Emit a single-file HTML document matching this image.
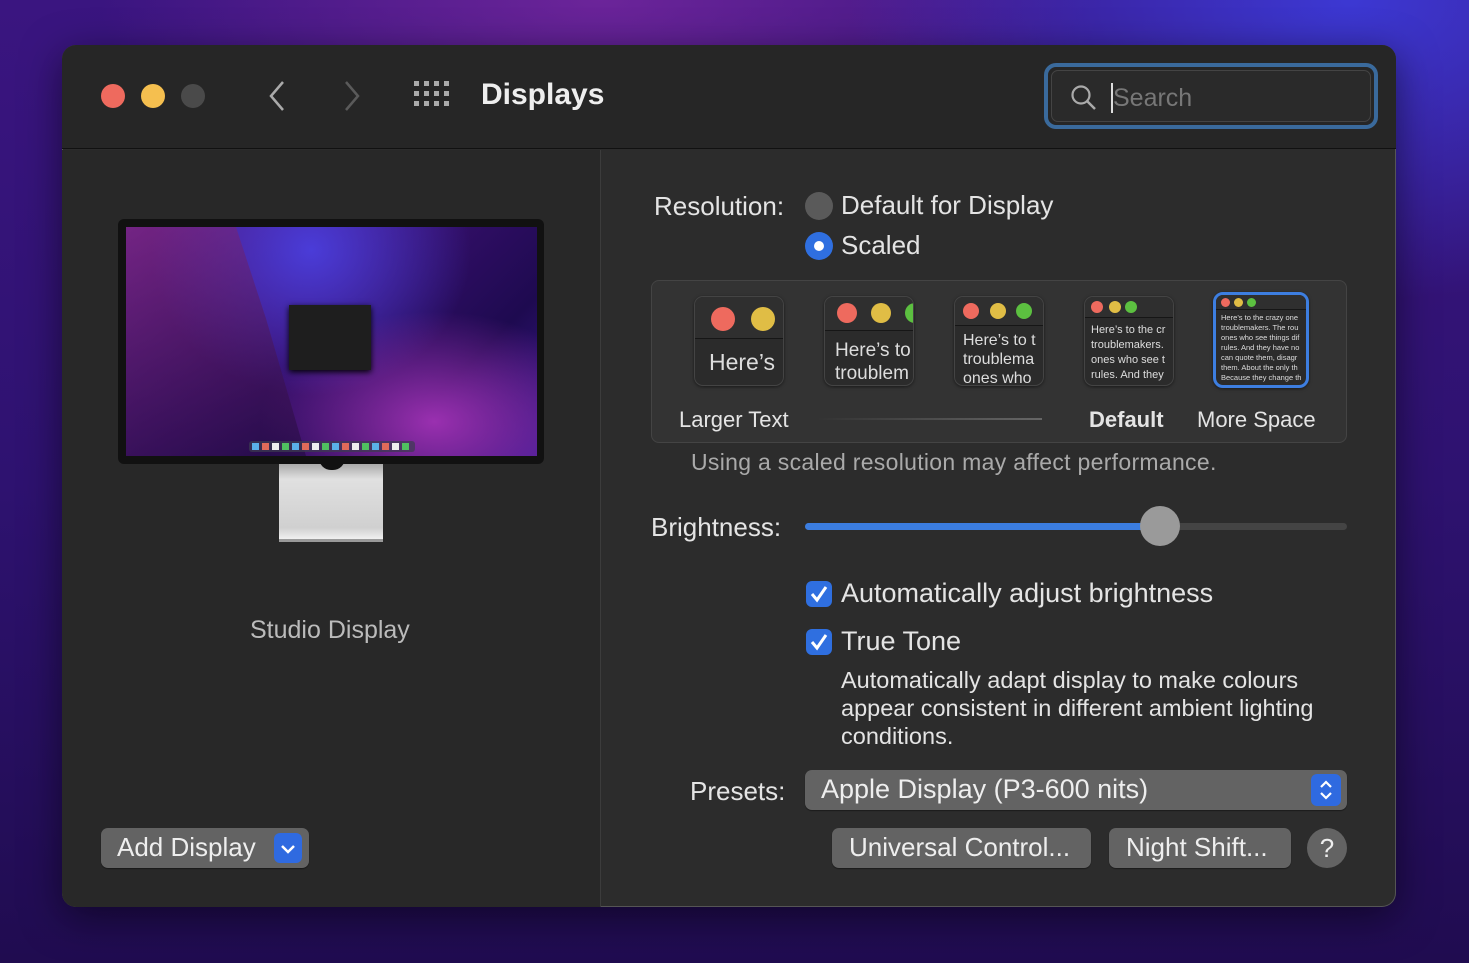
<!DOCTYPE html>
<html><head><meta charset="utf-8"><style>
*{margin:0;padding:0;box-sizing:border-box}
body{width:1469px;height:963px;overflow:hidden;position:relative;font-family:"Liberation Sans",sans-serif;color:#e6e6e6;
background:linear-gradient(180deg,#3a1580 0%,#2e1270 50%,#200c50 100%)}
.bg2{position:absolute;left:0;top:0;width:1469px;height:963px;background:
 radial-gradient(ellipse 500px 300px at 1350px 0px,rgba(60,60,220,.9),rgba(60,60,220,0)),
 radial-gradient(ellipse 500px 200px at 600px 0px,rgba(120,40,160,.8),rgba(120,40,160,0))}
.a{position:absolute}
.win{position:absolute;left:62px;top:45px;width:1334px;height:862px;border-radius:14px;background:#2c2c2c;overflow:hidden;box-shadow:0 0 0 1px #555 inset,0 10px 40px rgba(0,0,0,.5)}
.tb{position:absolute;left:0;top:0;width:1334px;height:104px;background:#262626;border-bottom:1px solid #111}
.left{position:absolute;left:0;top:105px;width:539px;height:757px;background:#282828;border-right:1px solid #3c3c3c}
.dot{position:absolute;width:24px;height:24px;border-radius:50%}
.t{position:absolute;font-size:25px;white-space:nowrap;color:#e4e4e4}
.btn{position:absolute;background:#636363;border-radius:7px;height:40px;font-size:26px;color:#eee;padding-left:17px;line-height:39px;box-shadow:0 1px 1px rgba(0,0,0,.4)}
.chk{position:absolute;width:26px;height:26px;border-radius:6px;background:#2f6fe0}
.prev{position:absolute;top:15px;width:90px;height:90px;border-radius:9px;background:#2b2b2b;border:1px solid #444;overflow:hidden;box-shadow:0 1px 3px rgba(0,0,0,.5)}
.prev .h{position:absolute;left:0;right:0;top:0;background:#2f2f2f;border-bottom:1px solid #161616}
.prev .c{position:absolute;border-radius:50%}
.prev .tx{position:absolute;left:10px;color:#ddd;white-space:nowrap}
</style></head><body>
<div class="bg2"></div>
<div class="win">
 <div class="tb">
  <div class="dot" style="left:39px;top:39px;background:#ee6a5e"></div>
  <div class="dot" style="left:79px;top:39px;background:#f5bf4f"></div>
  <div class="dot" style="left:119px;top:39px;background:#4a4a4a"></div>
  <svg class="a" style="left:200px;top:33px" width="30" height="36"><path d="M21 4 L9 18 L21 32" stroke="#aaa" stroke-width="2.5" fill="none"/></svg>
  <svg class="a" style="left:275px;top:33px" width="30" height="36"><path d="M9 4 L21 18 L9 32" stroke="#5a5a5a" stroke-width="2.5" fill="none"/></svg>
  <svg class="a" style="left:352px;top:36px" width="36" height="30" fill="#aaa">
   <rect x="0" y="0" width="5" height="5"/><rect x="10" y="0" width="5" height="5"/><rect x="20" y="0" width="5" height="5"/><rect x="30" y="0" width="5" height="5"/>
   <rect x="0" y="10" width="5" height="5"/><rect x="10" y="10" width="5" height="5"/><rect x="20" y="10" width="5" height="5"/><rect x="30" y="10" width="5" height="5"/>
   <rect x="0" y="20" width="5" height="5"/><rect x="10" y="20" width="5" height="5"/><rect x="20" y="20" width="5" height="5"/><rect x="30" y="20" width="5" height="5"/></svg>
  <div class="t" style="left:419px;top:33px;font-size:30px;font-weight:bold;color:#eee">Displays</div>
  <div class="a" style="left:982px;top:18px;width:334px;height:66px;border-radius:12px;border:4px solid #3a6a9c;background:#262626">
   <div class="a" style="left:3px;top:3px;right:3px;bottom:3px;border-radius:7px;border:1px solid #444;background:#2a2a2a"></div>
   <svg class="a" style="left:22px;top:17px" width="28" height="28"><circle cx="11" cy="11" r="8.5" stroke="#aaa" stroke-width="2.2" fill="none"/><path d="M17 17 L25 25" stroke="#aaa" stroke-width="2.5"/></svg>
   <div class="a" style="left:63px;top:16px;width:2px;height:30px;background:#ddd"></div>
   <div class="t" style="left:65px;top:17px;font-size:25px;color:#777">Search</div>
  </div>
 </div>
 <div class="left">
  <div class="a" style="left:56px;top:69px;width:426px;height:245px;border-radius:6px;background:#111"></div>
  <div class="a" style="left:64px;top:77px;width:411px;height:229px;overflow:hidden;background:
   radial-gradient(ellipse at 75% 85%,#9a30b0 0%,rgba(120,30,150,0) 40%),
   radial-gradient(ellipse at 45% 10%,#4a3cd8 0%,rgba(60,40,200,0) 50%),
   linear-gradient(135deg,#5a2090 0%,#3a1070 40%,#1e0a50 75%,#3a1a90 100%)">
   <div class="a" style="left:0;top:0;width:200px;height:229px;background:linear-gradient(160deg,rgba(140,40,120,.5),rgba(30,10,60,.6));clip-path:polygon(0 0,55% 0,70% 40%,90% 100%,0 100%)"></div>
   <div class="a" style="left:163px;top:78px;width:82px;height:65px;background:#1e1e1e;box-shadow:0 2px 6px #000"></div>
   <div class="a" style="left:123px;top:214px;width:166px;height:11px;border-radius:3px;background:rgba(60,60,80,.7)"></div>
   <div class="a" style="left:126px;top:216px;width:160px;height:7px;background:repeating-linear-gradient(90deg,#5ab0e8 0 7px,transparent 7px 10px,#e06a5a 10px 17px,transparent 17px 20px,#eee 20px 27px,transparent 27px 30px,#50c060 30px 37px,transparent 37px 40px)"></div>
  </div>
  <div class="a" style="left:217px;top:314px;width:104px;height:78px;background:linear-gradient(#aaa,#e0e0e0 20%,#d0d0d0 85%,#f0f0f0);border-bottom:3px solid #999"></div>
  <div class="a" style="left:257px;top:308px;width:26px;height:12px;border-radius:0 0 13px 13px;background:#111"></div>
  <div class="t" style="left:188px;top:466px;color:#bbb">Studio Display</div>
  <div class="btn" style="left:39px;top:678px;width:208px;padding-left:16px">Add Display
   <div class="a" style="left:173px;top:5px;width:28px;height:30px;border-radius:6px;background:#2f6ae0"><svg width="28" height="30"><path d="M8 13 L14 19 L20 13" stroke="#fff" stroke-width="2.5" fill="none"/></svg></div></div>
 </div>
 <div class="t" style="left:592px;top:146px;font-size:26px">Resolution:</div>
 <div class="a" style="left:743px;top:147px;width:28px;height:28px;border-radius:50%;background:#5a5a5a"></div>
 <div class="t" style="left:779px;top:145px;font-size:26px">Default for Display</div>
 <div class="a" style="left:743px;top:187px;width:28px;height:28px;border-radius:50%;background:#2f6fe0"><div class="a" style="left:9px;top:9px;width:10px;height:10px;border-radius:50%;background:#fff"></div></div>
 <div class="t" style="left:779px;top:185px;font-size:26px">Scaled</div>
 <div class="a" style="left:589px;top:235px;width:696px;height:163px;border-radius:8px;background:#333;border:1px solid #444">
  <div class="prev" style="left:42px"><div class="h" style="height:42px"></div><div class="c" style="left:16px;top:10px;width:24px;height:24px;background:#ee6a5e"></div><div class="c" style="left:56px;top:10px;width:24px;height:24px;background:#e0bd45"></div><div class="tx" style="left:14px;top:52px;font-size:23px">Here’s</div></div>
  <div class="prev" style="left:172px"><div class="h" style="height:34px"></div><div class="c" style="left:12px;top:6px;width:20px;height:20px;background:#ee6a5e"></div><div class="c" style="left:46px;top:6px;width:20px;height:20px;background:#e0bd45"></div><div class="c" style="left:80px;top:6px;width:20px;height:20px;background:#5cc040"></div><div class="tx" style="top:42px;font-size:19px;line-height:23px">Here’s to<br>troublem</div></div>
  <div class="prev" style="left:302px"><div class="h" style="height:29px"></div><div class="c" style="left:8px;top:6px;width:16px;height:16px;background:#ee6a5e"></div><div class="c" style="left:35px;top:6px;width:16px;height:16px;background:#e0bd45"></div><div class="c" style="left:61px;top:6px;width:16px;height:16px;background:#5cc040"></div><div class="tx" style="left:8px;top:34px;font-size:16px;line-height:19px">Here’s to t<br>troublema<br>ones who</div></div>
  <div class="prev" style="left:432px"><div class="h" style="height:21px"></div><div class="c" style="left:6px;top:4px;width:12px;height:12px;background:#ee6a5e"></div><div class="c" style="left:24px;top:4px;width:12px;height:12px;background:#e0bd45"></div><div class="c" style="left:40px;top:4px;width:12px;height:12px;background:#5cc040"></div><div class="tx" style="left:6px;top:26px;font-size:11px;line-height:15px">Here’s to the cr<br>troublemakers.<br>ones who see t<br>rules. And they</div></div>
  <div class="prev" style="left:561px;top:11px;width:96px;height:96px;border:3px solid #3d7ee0;border-radius:10px"><div class="h" style="height:15px"></div><div class="c" style="left:5px;top:3px;width:9px;height:9px;background:#ee6a5e"></div><div class="c" style="left:18px;top:3px;width:9px;height:9px;background:#e0bd45"></div><div class="c" style="left:31px;top:3px;width:9px;height:9px;background:#5cc040"></div><div class="tx" style="left:5px;top:18px;font-size:7.5px;line-height:10px">Here’s to the crazy one<br>troublemakers. The rou<br>ones who see things dif<br>rules. And they have no<br>can quote them, disagr<br>them. About the only th<br>Because they change th</div></div>
  <div class="t" style="left:27px;top:126px;font-size:22px">Larger Text</div>
  <div class="a" style="left:165px;top:137px;width:225px;height:2px;background:linear-gradient(90deg,#333,#666)"></div>
  <div class="t" style="left:437px;top:126px;font-size:22px;font-weight:bold">Default</div>
  <div class="t" style="left:545px;top:126px;font-size:22px">More Space</div>
 </div>
 <div class="t" style="left:629px;top:404px;font-size:23px;color:#aaa;letter-spacing:.3px">Using a scaled resolution may affect performance.</div>
 <div class="t" style="left:589px;top:467px;font-size:26px">Brightness:</div>
 <div class="a" style="left:743px;top:478px;width:542px;height:7px;border-radius:4px;background:#444"></div>
 <div class="a" style="left:743px;top:478px;width:350px;height:7px;border-radius:4px;background:#3b7de0"></div>
 <div class="a" style="left:1078px;top:461px;width:40px;height:40px;border-radius:50%;background:#9a9a9a"></div>
 <div class="chk" style="left:744px;top:536px"><svg width="26" height="26"><path d="M6 13 L11 19 L20 6" stroke="#fff" stroke-width="3" fill="none"/></svg></div>
 <div class="t" style="left:779px;top:533px;font-size:27px">Automatically adjust brightness</div>
 <div class="chk" style="left:744px;top:584px"><svg width="26" height="26"><path d="M6 13 L11 19 L20 6" stroke="#fff" stroke-width="3" fill="none"/></svg></div>
 <div class="t" style="left:779px;top:581px;font-size:27px">True Tone</div>
 <div class="t" style="left:779px;top:621px;font-size:23.5px;line-height:28px">Automatically adapt display to make colours<br>appear consistent in different ambient lighting<br>conditions.</div>
 <div class="t" style="left:628px;top:731px;font-size:26px">Presets:</div>
 <div class="btn" style="left:743px;top:725px;width:542px;height:40px;padding-left:16px;font-size:27px">Apple Display (P3-600 nits)
  <div class="a" style="left:506px;top:4px;width:30px;height:32px;border-radius:6px;background:#2f6ae0"><svg width="30" height="32"><path d="M10 13 L15 8 L20 13 M10 19 L15 24 L20 19" stroke="#fff" stroke-width="2.2" fill="none"/></svg></div></div>
 <div class="btn" style="left:770px;top:783px;width:259px">Universal Control...</div>
 <div class="btn" style="left:1047px;top:783px;width:182px">Night Shift...</div>
 <div class="a" style="left:1245px;top:783px;width:40px;height:40px;border-radius:50%;background:#636363;text-align:center;line-height:40px;font-size:26px;color:#eee">?</div>
</div>
</body></html>
